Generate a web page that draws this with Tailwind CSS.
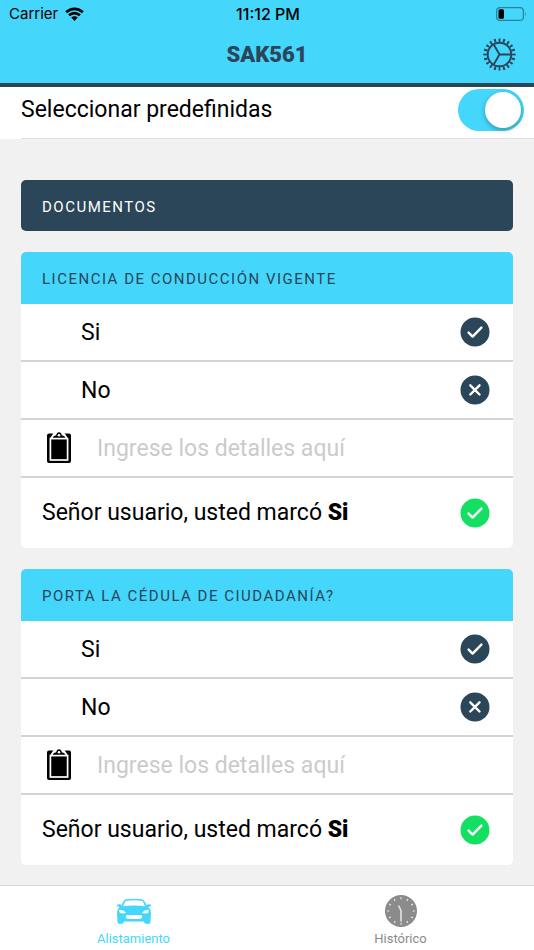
<!DOCTYPE html>
<html lang="es">
<head>
<meta charset="utf-8">
<meta name="viewport" content="width=device-width, initial-scale=1">
<title>SAK561</title>
<script src="https://cdn.jsdelivr.net/npm/@tailwindcss/browser@4"></script>
</head>
<body class="flex min-h-screen flex-col bg-[#f1f1f1] font-[Roboto,'Liberation_Sans',sans-serif] text-[23px] leading-7 text-black">

<svg class="hidden" aria-hidden="true">
  <symbol id="check" viewBox="0 0 30 30"><circle cx="15" cy="15" r="14.5" fill="currentColor"/><path d="M8.6 15.6l4 4L21.4 10.6" fill="none" stroke="#fff" stroke-width="2.4" stroke-linecap="round" stroke-linejoin="round"/></symbol>
  <symbol id="cross" viewBox="0 0 30 30"><circle cx="15" cy="15" r="14.5" fill="currentColor"/><path d="M10.3 10.3l9.2 9.2M19.5 10.3l-9.2 9.2" fill="none" stroke="#fff" stroke-width="2.4" stroke-linecap="round"/></symbol>
  <symbol id="clipboard" viewBox="0 0 26 32">
    <rect x="1" y="1.500" width="24" height="29.500" rx="2"/>
    <path d="M7.500 1H18.500L22 6.500H4z" fill="#fff"/>
    <rect x="4.400" y="6.600" width="17.200" height="21.400" fill="none" stroke="#fff" stroke-width="1.700"/>
    <path d="M6.500 5.800L8 3.900L10.200 3.300Q10.700 .3 13 .3T15.800 3.300L18 3.900L19.500 5.800z"/>
    <circle cx="13" cy="3.300" r="1.300" fill="#fff"/>
  </symbol>
</svg>

<header class="border-b-4 border-[#2b4559] bg-[#44d6fb]">
  <div class="grid h-7 grid-cols-3 items-center pr-[7px] pl-[9px] font-[Inter,sans-serif] text-[15px] leading-5">
    <div class="flex items-center gap-[7px]">
      <span>Carrier</span>
      <svg class="h-[14px] w-[19px]" viewBox="0 0 19 14" aria-label="Wi-Fi"><path d="M1.200 5.300a11.800 11.800 0 0 1 16.600 0M4.100 8.300a7.700 7.700 0 0 1 10.800 0" fill="none" stroke="#000" stroke-width="2.700"/><path d="M9.500 14l-3.200-3.400a4.500 4.500 0 0 1 6.400 0z"/></svg>
    </div>
    <span class="text-center text-base font-medium">11:12 PM</span>
    <svg class="h-[14px] w-[31px] justify-self-end" viewBox="0 0 31 14" aria-label="Batería"><rect x=".6" y=".6" width="26.800" height="12.800" rx="3.500" fill="none" stroke="#2a8298" stroke-width="1.200"/><path d="M29 4.500q1.800 2.500 0 5z" fill="#2a8298"/><rect x="2.500" y="2.200" width="5.500" height="9.600" rx="1.500"/></svg>
  </div>
  <div class="grid h-[55px] grid-cols-[1fr_auto_1fr] items-center px-[18px] pb-[2px]">
    <h1 class="col-start-2 text-[22px] font-black text-[#2b4559]">SAK561</h1>
    <button type="button" aria-label="Configuración" class="justify-self-end text-[#2b4559]">
      <svg class="size-[33px]" viewBox="0 0 33 33" fill="none" stroke="currentColor">
        <circle cx="16.500" cy="16.500" r="11.800" stroke-width="1.900"/>
        <circle cx="16.500" cy="16.500" r="14.300" stroke-width="3.600" pathLength="80" stroke-dasharray="1.700 2.300" stroke-dashoffset=".85"/>
        <path d="M16.500 16.500H28M16.500 16.500L10.700 6.500M16.500 16.500L10.700 26.500" stroke-width="1.900"/>
      </svg>
    </button>
  </div>
</header>

<main class="flex-1 pb-5">
  <div class="bg-white">
    <div class="ml-[21px] flex h-[52px] items-center justify-between border-b border-[#dfdfdf] pr-[10px] pb-[5px]">
      <label for="preset">Seleccionar predefinidas</label>
      <input id="preset" type="checkbox" role="switch" checked class="h-[42px] w-[66px] appearance-none rounded-full bg-[#44d6fb] p-[3px] before:ml-6 before:block before:size-9 before:rounded-full before:bg-white before:shadow-[0_2px_5px_rgba(0,0,0,0.3)]">
    </div>
  </div>

  <div class="mx-[21px] mt-[41px] flex flex-col gap-[21px]">
    <h2 class="flex h-[51px] items-center rounded-[5px] bg-[#2b4559] px-[21px] pt-[2px] text-[15px] tracking-widest text-white">DOCUMENTOS</h2>

    <section class="overflow-hidden rounded-[5px] bg-white">
      <h3 class="flex h-[52px] items-center bg-[#44d6fb] px-[21px] pt-[2px] text-[15px] tracking-widest text-[#2b4559]">LICENCIA DE CONDUCCIÓN VIGENTE</h3>
      <button type="button" class="flex h-[58px] w-full items-center justify-between border-b-2 border-[#d3d3d5] pr-[23px] pl-[60px]"><span class="pt-[2px]">Si</span> <svg class="size-[30px] text-[#2b4559]"><use href="#check"/></svg></button>
      <button type="button" class="flex h-[58px] w-full items-center justify-between border-b-2 border-[#d3d3d5] pr-[23px] pl-[60px]"><span class="pt-[2px]">No</span> <svg class="size-[30px] text-[#2b4559]"><use href="#cross"/></svg></button>
      <div class="flex h-[58px] items-center gap-[25px] border-b-2 border-[#d3d3d5] px-[25px]">
        <label for="detail-1" aria-label="Detalles"><svg class="h-8 w-[26px]"><use href="#clipboard"/></svg></label>
        <input id="detail-1" type="text" placeholder="Ingrese los detalles aquí" class="min-w-0 flex-1 pt-[2px] outline-none placeholder:text-[#cbcbcb]">
      </div>
      <div class="flex h-[70px] items-center justify-between pr-[23px] pl-[21px]"><p>Señor usuario, usted marcó <strong class="font-black">Si</strong></p><svg class="size-[30px] text-[#13df62]"><use href="#check"/></svg></div>
    </section>

    <section class="overflow-hidden rounded-[5px] bg-white">
      <h3 class="flex h-[52px] items-center bg-[#44d6fb] px-[21px] pt-[2px] text-[15px] tracking-widest text-[#2b4559]">PORTA LA CÉDULA DE CIUDADANÍA?</h3>
      <button type="button" class="flex h-[58px] w-full items-center justify-between border-b-2 border-[#d3d3d5] pr-[23px] pl-[60px]"><span class="pt-[2px]">Si</span> <svg class="size-[30px] text-[#2b4559]"><use href="#check"/></svg></button>
      <button type="button" class="flex h-[58px] w-full items-center justify-between border-b-2 border-[#d3d3d5] pr-[23px] pl-[60px]"><span class="pt-[2px]">No</span> <svg class="size-[30px] text-[#2b4559]"><use href="#cross"/></svg></button>
      <div class="flex h-[58px] items-center gap-[25px] border-b-2 border-[#d3d3d5] px-[25px]">
        <label for="detail-2" aria-label="Detalles"><svg class="h-8 w-[26px]"><use href="#clipboard"/></svg></label>
        <input id="detail-2" type="text" placeholder="Ingrese los detalles aquí" class="min-w-0 flex-1 pt-[2px] outline-none placeholder:text-[#cbcbcb]">
      </div>
      <div class="flex h-[70px] items-center justify-between pr-[23px] pl-[21px]"><p>Señor usuario, usted marcó <strong class="font-black">Si</strong></p><svg class="size-[30px] text-[#13df62]"><use href="#check"/></svg></div>
    </section>
  </div>
</main>

<nav class="grid h-[66px] grid-cols-2 border-t border-[#d8d8d8] bg-white text-[13px] leading-4">
  <a href="#alistamiento" aria-current="page" class="flex flex-col items-center gap-[3px] pt-2 text-[#44d6fb]">
    <svg class="h-[34px] w-9" viewBox="0 0 36 34" fill="currentColor">
      <path d="M7.300 7.400Q8.200 5.500 10.300 5.200Q18 4.200 25.700 5.200Q27.800 5.500 28.700 7.400L30.700 11.500L31.500 10.200L34.700 10.400Q35.500 11.600 34.200 12.500L32.300 13Q35.200 15.500 34.900 19.500L34.500 28Q34.400 29.700 33 29.700H29.600Q28.200 29.700 28 27.600H8Q7.800 29.700 6.400 29.700H3Q1.600 29.700 1.500 28L1.100 19.500Q.8 15.500 3.700 13L1.800 12.500Q.5 11.600 1.300 10.400L4.500 10.200L5.300 11.500z"/>
      <path d="M9 7.700Q9.500 6.900 10.600 6.800Q18 5.900 25.400 6.800Q26.500 6.900 27 7.700L29 12.300Q18 10.600 7 12.300zM3.200 15.700Q7.800 15.800 10.200 19Q5.600 20 3.500 18.500zM32.800 15.700Q28.200 15.800 25.800 19Q30.400 20 32.500 18.500zM11.700 21H24.300Q26.500 21 26.300 22.900Q25.800 25 23.500 25H12.500Q10.200 25 9.700 22.900Q9.500 21 11.700 21z" fill="#fff"/>
    </svg>
    <span>Alistamiento</span>
  </a>
  <a href="#historico" class="flex flex-col items-center gap-[3px] pt-2 text-[#8b8b8b]">
    <svg class="h-[34px] w-9" viewBox="0 0 36 34" fill="none">
      <circle cx="18" cy="17" r="16" fill="currentColor"/>
      <circle cx="18" cy="17" r="12.700" stroke="#e4e4e4" stroke-width="1.900" pathLength="120" stroke-dasharray="2 8" stroke-dashoffset="1"/>
      <path d="M15.500 11.500L18 16.500V27.500" stroke="#e4e4e4" stroke-width="1.600" stroke-linejoin="round"/>
    </svg>
    <span>Histórico</span>
  </a>
</nav>
</body>
</html>
